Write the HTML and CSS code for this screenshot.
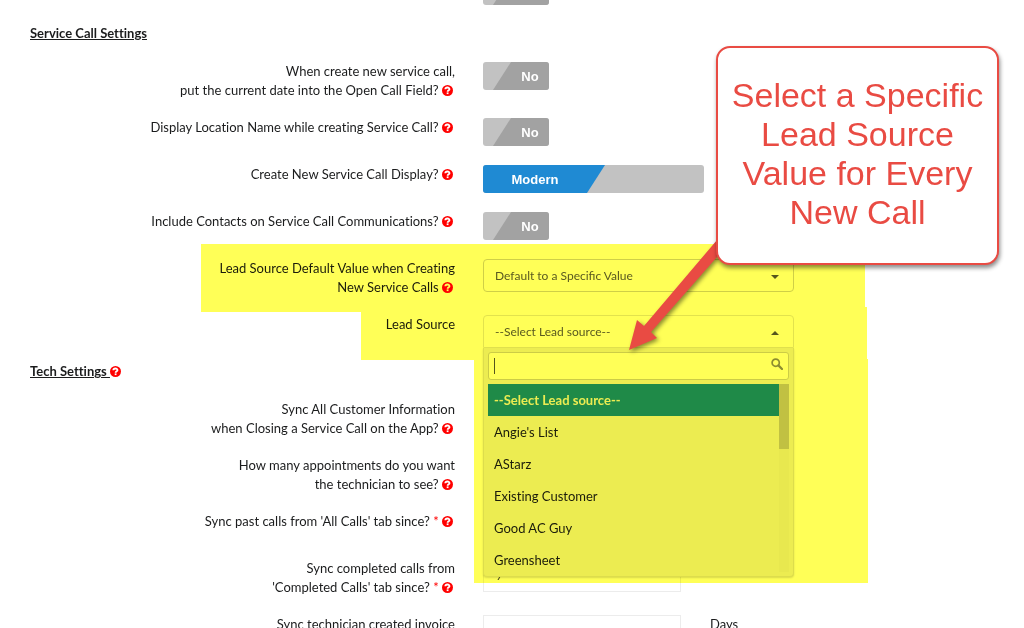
FILE: index.html
```html
<!DOCTYPE html>
<html lang="en">
<head>
  <meta charset="UTF-8">
  <meta name="viewport" content="width=device-width, initial-scale=1.0">
  <title>Service Call Settings</title>
  <link rel="stylesheet" href="styles.css">
</head>
<body>

  <!-- Shared icons -->
  <svg class="icon-defs" aria-hidden="true">
    <symbol id="help" viewBox="0 0 11 11">
      <circle cx="5.5" cy="5.5" r="5.5" fill="#ff0000"/>
      <path d="M3.3 4.3C3.4 1.9 7.6 1.9 7.5 4.2C7.5 5.4 5.6 5.2 5.6 6.8" fill="none" stroke="#ffffff" stroke-width="1.8"/>
      <rect x="4.7" y="7.4" width="1.8" height="1.7" fill="#ffffff"/>
    </symbol>
  </svg>

  <div class="page">
    <form class="settings">
      <div class="row">
        <span></span>
        <span class="toggle"><input type="checkbox" aria-label="Enabled"></span>
      </div>

      <!-- Service call settings -->
      <h2 class="section-title"><u>Service Call Settings</u></h2>

      <div class="row">
        <label for="openCallDate">When create new service call,<br>put the current date into the Open Call Field? <svg class="help"><use href="#help"/></svg></label>
        <span class="toggle"><input type="checkbox" id="openCallDate"><span class="toggle-text">No</span></span>
      </div>

      <div class="row">
        <label for="locationName">Display Location Name while creating Service Call? <svg class="help"><use href="#help"/></svg></label>
        <span class="toggle"><input type="checkbox" id="locationName"><span class="toggle-text">No</span></span>
      </div>

      <div class="row">
        <label for="callDisplay">Create New Service Call Display? <svg class="help"><use href="#help"/></svg></label>
        <span class="toggle toggle-wide"><input type="checkbox" id="callDisplay" checked><span class="toggle-text">Modern</span></span>
      </div>

      <div class="row">
        <label for="includeContacts">Include Contacts on Service Call Communications? <svg class="help"><use href="#help"/></svg></label>
        <span class="toggle"><input type="checkbox" id="includeContacts"><span class="toggle-text">No</span></span>
      </div>

      <div class="row">
        <label for="leadDefault">Lead Source Default Value when Creating<br>New Service Calls <svg class="help"><use href="#help"/></svg></label>
        <div class="dropdown">
          <select class="dropdown-box" id="leadDefault">
            <option>Default to a Specific Value</option>
          </select>
          <span class="caret"></span>
        </div>
      </div>

      <div class="row">
        <label for="leadSource">Lead Source</label>
        <div class="dropdown">
          <button type="button" class="dropdown-box is-open" id="leadSource" aria-expanded="true">--Select Lead source--</button>
          <span class="caret caret-up"></span>
          <div class="menu">
            <div class="search">
              <input type="text" aria-label="Search lead sources">
              <span class="cursor"></span>
              <svg class="search-icon" viewBox="0 0 12 12">
                <circle cx="4.7" cy="4.7" r="3.6" fill="none" stroke="#8c8c8c" stroke-width="1.7"/>
                <path d="M7.4 7.4L11 11" stroke="#8c8c8c" stroke-width="2.2" stroke-linecap="round"/>
              </svg>
            </div>
            <div class="list">
              <ul class="options" role="listbox">
                <li class="selected" role="option">--Select Lead source--</li>
                <li role="option">Angie's List</li>
                <li role="option">AStarz</li>
                <li role="option">Existing Customer</li>
                <li role="option">Good AC Guy</li>
                <li role="option">Greensheet</li>
              </ul>
              <div class="scrollbar"><div class="thumb"></div></div>
            </div>
          </div>
        </div>
      </div>

      <!-- Tech settings -->
      <h2 class="section-title"><u>Tech Settings&nbsp;</u><svg class="help"><use href="#help"/></svg></h2>

      <div class="row">
        <span class="label">Sync All Customer Information<br>when Closing a Service Call on the App? <svg class="help"><use href="#help"/></svg></span>
      </div>

      <div class="row">
        <span class="label">How many appointments do you want<br>the technician to see? <svg class="help"><use href="#help"/></svg></span>
      </div>

      <div class="row">
        <span class="label">Sync past calls from 'All Calls' tab since? <span class="required">*</span> <svg class="help"><use href="#help"/></svg></span>
      </div>

      <div class="row">
        <label for="completedDays">Sync completed calls from<br>'Completed Calls' tab since? <span class="required">*</span> <svg class="help"><use href="#help"/></svg></label>
        <div class="field"><input type="text" id="completedDays" value="7"></div>
      </div>

      <div class="row">
        <label for="invoiceDays">Sync technician created invoice</label>
        <div class="field"><input type="text" id="invoiceDays"><span>Days</span></div>
      </div>
    </form>

    <!-- Highlighter and callout drawn over the form -->
    <svg class="highlight" viewBox="0 0 667 339" aria-hidden="true">
      <path d="M0 0H664V63H666V115H667V339H273V116H160V68H0Z" fill="#ffff57"/>
    </svg>
    <svg class="arrow" viewBox="0 0 110 120" aria-hidden="true">
      <path d="M97 10L24 96L17 90L9 120L37 108L31 102L97 27Z" fill="#e94b43"/>
    </svg>
    <div class="callout">Select a Specific Lead Source Value for Every New Call</div>
  </div>

</body>
</html>
```
FILE: styles.css
```css
/* Basic reset */
* {
  margin: 0;
  padding: 0;
  box-sizing: border-box;
}

body {
  background-color: #ffffff;
  color: #1b1c1d;
  font-family: Lato, sans-serif;
  font-size: 13px;
  font-variant-ligatures: none;
  line-height: 19px;
}

input,
select,
button {
  font-family: inherit;
  font-size: 12px;
  outline: none;
}

.icon-defs {
  position: absolute;
  width: 0;
  height: 0;
}

.page {
  position: relative;
  height: 100vh;
  overflow: hidden;
}

/* The form is scrolled a little past its first rows */
.settings {
  margin-top: -23px;
  padding: 0 31px 0 30px;
}

.section-title {
  margin-bottom: 19px;
  font-size: 13px;
  font-weight: bold;
  line-height: 19px;
}

.row {
  display: grid;
  grid-template-columns: 5fr 6fr;
  column-gap: 28px;
  align-items: start;
  min-height: 29px;
  margin-bottom: 18px;
}

.row label,
.label {
  text-align: right;
}

.help {
  width: 11px;
  height: 11px;
  margin-right: 2px;
  vertical-align: -1px;
}

.section-title .help {
  margin-right: 0;
}

.required {
  color: #ff0000;
}

/* Slanted on/off switches */
.toggle {
  position: relative;
  display: flex;
  align-items: center;
  width: 66px;
  height: 28px;
  border-radius: 3px;
  background-color: #c2c2c2;
  overflow: hidden;
}

.toggle::before {
  content: "";
  position: absolute;
  inset: 0;
  background-color: #a2a2a2;
  clip-path: polygon(28px 0, 100% 0, 100% 100%, 10px 100%);
}

.toggle input {
  position: absolute;
  inset: 0;
  width: 100%;
  height: 100%;
  opacity: 0;
  cursor: pointer;
}

.toggle-text {
  position: relative;
  width: 100%;
  padding-left: 28px;
  text-align: center;
  color: #ffffff;
  font-family: "Liberation Sans", Arial, sans-serif;
  font-weight: bold;
}

.toggle-wide {
  width: 221px;
}

.toggle-wide::before {
  background-color: #1f8ad3;
  clip-path: polygon(0 0, 122px 0, 104px 100%, 0 100%);
}

.toggle-wide .toggle-text {
  width: 104px;
  padding-left: 0;
}

/* Dropdowns */
.dropdown {
  position: relative;
  width: 61%;
  margin-bottom: -4px;
}

.dropdown-box {
  display: block;
  width: 100%;
  height: 33px;
  padding: 0 11px;
  border: 1px solid #cfcfcf;
  border-radius: 4px;
  background-color: #ffffff;
  color: #5a5a5a;
  text-align: left;
  appearance: none;
}

.dropdown-box.is-open {
  border-color: #e2e2e2;
  border-radius: 4px 4px 0 0;
}

.caret {
  position: absolute;
  top: 16px;
  right: 15px;
  border: 4px solid transparent;
  border-top-color: #555555;
  border-bottom: none;
  pointer-events: none;
}

.caret-up {
  border-top: none;
  border-bottom: 4px solid #555555;
}

.menu {
  position: absolute;
  top: 100%;
  left: 0;
  right: 0;
  z-index: 1;
  padding: 4px;
  border: 1px solid #dddddd;
  border-top: none;
  border-radius: 0 0 4px 4px;
  background-color: #ececec;
  box-shadow: 0 1px 2px rgba(0, 0, 0, 0.15);
}

.search {
  position: relative;
  margin-bottom: 4px;
}

.search input {
  display: block;
  width: 100%;
  height: 28px;
  padding: 0 28px 0 6px;
  border: 1px solid #cccccc;
  border-radius: 3px;
  background-color: #ffffff;
}

.cursor {
  position: absolute;
  top: 6px;
  left: 6px;
  width: 1px;
  height: 16px;
  background-color: #555555;
}

.search-icon {
  position: absolute;
  top: 6px;
  right: 6px;
  width: 12px;
  height: 12px;
}

.list {
  display: flex;
  height: 188px;
  overflow: hidden;
}

.options {
  flex: 1;
  list-style: none;
}

.options li {
  height: 32px;
  padding: 0 6px;
  line-height: 32px;
}

.options .selected {
  background-color: #1f8ad3;
  color: #ececec;
  font-weight: bold;
}

.scrollbar {
  width: 10px;
  background-color: #e8e8e8;
}

.thumb {
  height: 65px;
  background-color: #c1c1c1;
}

/* Plain text fields */
.field {
  display: flex;
  gap: 29px;
}

.field input {
  width: 198px;
  height: 33px;
  padding: 0 12px;
  border: 1px solid #ececec;
  color: #5a5a5a;
}

/* Annotations */
.highlight {
  position: absolute;
  top: 244px;
  left: 201px;
  z-index: 2;
  width: 667px;
  height: 339px;
  mix-blend-mode: multiply;
  pointer-events: none;
}

.arrow {
  position: absolute;
  top: 230px;
  left: 620px;
  z-index: 3;
  width: 110px;
  height: 120px;
  overflow: visible;
  filter: drop-shadow(2px 2px 2px rgba(0, 0, 0, 0.45));
  pointer-events: none;
}

.callout {
  position: absolute;
  top: 46px;
  left: 716px;
  z-index: 4;
  width: 283px;
  padding: 28px 12px 31px;
  border: 2px solid #e94b43;
  border-radius: 14px;
  background-color: #ffffff;
  box-shadow: 1px 3px 4px rgba(0, 0, 0, 0.45);
  color: #e94b43;
  font-family: "Liberation Sans", Arial, sans-serif;
  font-size: 34px;
  line-height: 39px;
  text-align: center;
}
```
